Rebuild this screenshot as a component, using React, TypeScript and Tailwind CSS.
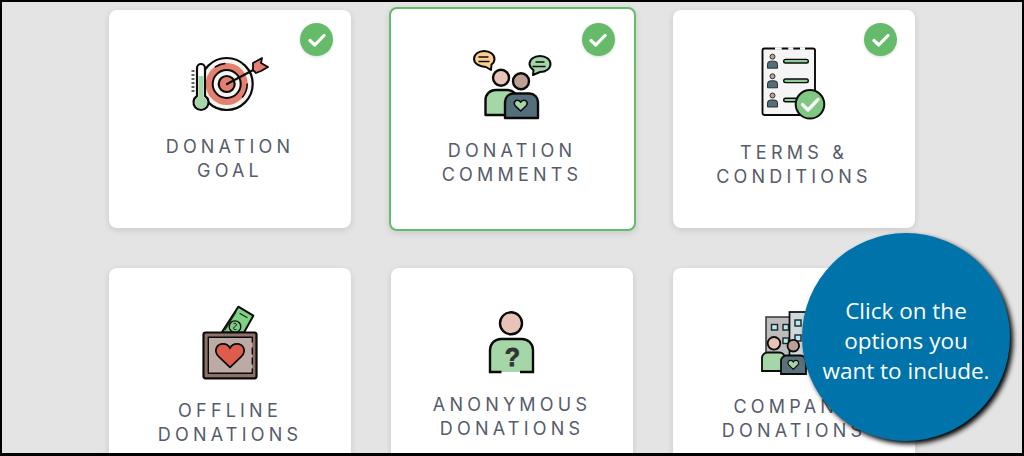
import React from "react";

const K = "#0a0a0a";

function Heart({ x, y, s, fill, w }: { x: number; y: number; s: number; fill: string; w: number }) {
  return (
    <path
      transform={`translate(${x} ${y}) scale(${s})`}
      d="M0 12 L-11.5 1 C-17 -5 -13 -11.5 -7 -11.5 C-3.5 -11.5 -1 -9.5 0 -7 C1 -9.5 3.5 -11.5 7 -11.5 C13 -11.5 17 -5 11.5 1 Z"
      fill={fill}
      stroke={K}
      strokeWidth={w / s}
      strokeLinejoin="round"
    />
  );
}

function GoalIcon() {
  return (
    <svg width="80" height="64" viewBox="190 52 80 64" className="mx-auto block">
      <g stroke={K} strokeLinecap="round" strokeLinejoin="round">
        <circle cx="226.7" cy="84" r="26" fill="#f5f5f0" strokeWidth="2.2" />
        <circle cx="226.7" cy="84" r="21" fill="#e57f70" stroke="none" />
        <circle cx="226.7" cy="84" r="20.5" fill="none" strokeWidth="1.6" strokeDasharray="14 70 10 100" />
        <circle cx="226.7" cy="84" r="14" fill="#f5f5f0" strokeWidth="2" />
        <circle cx="226.7" cy="84" r="8" fill="#e57f70" strokeWidth="2.2" />
        <path d="M227 84 L255 69" fill="none" strokeWidth="2.2" />
        <path d="M253 70 L253 63 L262 58 L261 63 L268 67 L261 71 L256 73 Z" fill="#e57f70" strokeWidth="1.8" />
      </g>
      <path d="M197 92 V68 a4 4 0 0 1 8 0 V96 a7.5 7.5 0 1 1 -8 0 Z" fill="#fff" stroke={K} strokeWidth="2.2" />
      <path d="M198.5 76 h5 V97 a6 6 0 1 1 -5 0 Z" fill="#a5d6a7" />
      <path d="M191.5 71 h3 M191.5 75 h3 M191.5 79 h3 M191.5 83 h3 M191.5 87 h3 M191.5 91 h3" stroke="#333" strokeWidth="1.6" />
    </svg>
  );
}

function CommentsIcon() {
  return (
    <svg width="80" height="72" viewBox="472 48 80 72" className="mx-auto block">
      <g stroke={K} strokeWidth="2" strokeLinejoin="round" strokeLinecap="round">
        <path d="M484 51 c6 0 10.500 3.500 10.500 8 c0 2 -1 4 -3 5.500 L491 70 L486 67 c-6.500 0 -12 -3.500 -12 -8 s4.500 -8 10 -8 Z" fill="#fbcf94" />
        <path d="M479 57 h9 M479 61.500 h10" fill="none" strokeWidth="1.400" />
        <path d="M540 56 c6 0 10.500 3.500 10.500 8 s-4.500 8 -10.500 8 L533 75 L533.500 70 c-2 -1.500 -4 -3.500 -4 -6 c0 -4.500 4.500 -8 10.500 -8 Z" fill="#a5d6a7" />
        <path d="M536 62 h8 M533 66.500 h12" fill="none" strokeWidth="1.400" />
        <path d="M485.500 115 V100 a10 10 0 0 1 10 -10 h12 a10 10 0 0 1 10 10 V115 Z" fill="#a5d6a7" strokeWidth="2.400" />
        <circle cx="501" cy="77.700" r="8" fill="#e8c4b8" strokeWidth="2.400" />
        <circle cx="521" cy="81.300" r="8" fill="#bc9f95" strokeWidth="2.400" />
        <path d="M505 118 V102 a8.500 8.500 0 0 1 8.500 -8.500 h16 a8.500 8.500 0 0 1 8.500 8.500 V118 Z" fill="#546e7a" strokeWidth="2.400" />
      </g>
      <Heart x={520.7} y={105.5} s={0.46} fill="#a5d6a7" w={1.6} />
    </svg>
  );
}

function TinyPerson({ y }: { y: number }) {
  return (
    <g>
      <path d={`M767.500 ${y + 11.500} v-4 a3 3 0 0 1 3 -3 h4 a3 3 0 0 1 3 3 v4 Z`} fill="#546e7a" stroke="#222" strokeWidth="0.9" />
      <circle cx="772.500" cy={y} r="2.500" fill="#bc9f95" stroke="#222" strokeWidth="0.9" />
      <path d={`M785.500 ${y + 4.500} h21`} stroke={K} strokeWidth="5" strokeLinecap="round" />
      <path d={`M785.500 ${y + 4.500} h21`} stroke="#8fce92" strokeWidth="2.200" strokeLinecap="round" />
    </g>
  );
}

function TermsIcon() {
  return (
    <svg width="80" height="76" viewBox="754 46 80 76" className="mx-auto block">
      <rect x="762.500" y="48.500" width="52.500" height="66.500" rx="2" fill="#f5f5f5" stroke={K} strokeWidth="1.900" />
      <path d="M775 48.500 h6.700 M788.300 48.500 h5 M800 48.500 h5" stroke="#fff" strokeWidth="2.400" />
      <TinyPerson y={56.700} />
      <TinyPerson y={76.300} />
      <TinyPerson y={95.500} />
      <circle cx="810" cy="104.300" r="14.300" fill="#81c784" stroke={K} strokeWidth="2" />
      <path d="M802.500 104.500 L808 110 L818 99.500" fill="none" stroke="#f5f5f5" strokeWidth="3.400" strokeLinecap="round" strokeLinejoin="round" />
    </svg>
  );
}

function OfflineIcon() {
  return (
    <svg width="80" height="76" viewBox="190 304 80 76" className="mx-auto block">
      <g stroke={K} strokeLinejoin="round" strokeLinecap="round">
        <path d="M221.700 332.500 L238.300 306.700 L253.300 315.700 L244 332.500 Z" fill="#7fd183" strokeWidth="2" />
        <path d="M240 313.500 L247 317.500 M225 330 L236 312" stroke="#222" strokeWidth="1.200" fill="none" />
        <circle cx="235" cy="326.700" r="5.800" fill="#7ccb84" strokeWidth="1.400" />
        <path d="M234 323.500 c3 -1 3 2 1 3 c-2 1 -2 4 1 3" fill="none" strokeWidth="1" />
        <rect x="203.500" y="332.500" width="53" height="45.800" rx="2" fill="#8d7168" strokeWidth="2.200" />
        <rect x="208.300" y="337.300" width="44" height="36" fill="#bcaaa4" stroke="none" />
        <path d="M252.300 342 V337.300 H208.300 V373.300 H252.300 V369 M252.300 348 V354 M252.300 358 V364" fill="none" strokeWidth="1.400" />
      </g>
      <Heart x={230} y={355.300} s={1} fill="#dd5c4c" w={1.700} />
    </svg>
  );
}

function AnonIcon() {
  return (
    <svg width="80" height="64" viewBox="472 310 80 64" className="mx-auto block">
      <path d="M490 372 V350 a11 11 0 0 1 11 -11 h21 a11 11 0 0 1 11 11 V372 Z" fill="#a5d6a7" />
      <path d="M501.500 372 H490 V350 a11 11 0 0 1 11 -11 h21 a11 11 0 0 1 11 11 V372 H520" fill="none" stroke={K} strokeWidth="2.400" />
      <circle cx="511" cy="323.300" r="11" fill="#e8c4b8" stroke={K} strokeWidth="2.400" />
      <text x="512.500" y="366" textAnchor="middle" fontFamily="'Liberation Sans', sans-serif" fontWeight="700" fontSize="25" fill="#333" stroke="#333" strokeWidth="0.800">?</text>
    </svg>
  );
}

function CompanyIcon() {
  return (
    <svg width="80" height="68" viewBox="754 308 80 68" className="mx-auto block">
      <rect x="766" y="317" width="26" height="40" fill="#bdbdbd" stroke="#333" strokeWidth="1.500" />
      <rect x="789.500" y="312" width="30" height="56" fill="#cfd8dc" stroke={K} strokeWidth="1.700" />
      <g fill="#b2ebf2" stroke="#222" strokeWidth="1.400">
        <rect x="771.500" y="324.500" width="6" height="5.500" />
        <rect x="783" y="324.500" width="5.500" height="5.500" />
        <rect x="795" y="320" width="6" height="6" />
        <rect x="783" y="338" width="5.500" height="5.500" />
        <rect x="795" y="335" width="6" height="6" />
      </g>
      <path d="M762 371 V358 a5.500 5.500 0 0 1 5.500 -5.500 h12 a5.500 5.500 0 0 1 5.500 5.500 V371 Z" fill="#a5d6a7" stroke={K} strokeWidth="1.800" />
      <circle cx="774" cy="343.300" r="6.300" fill="#e8c4b8" stroke={K} strokeWidth="1.800" />
      <path d="M781 374 V361 a5.500 5.500 0 0 1 5.500 -5.500 h14 a5.500 5.500 0 0 1 5.500 5.500 V374 Z" fill="#5a717c" stroke={K} strokeWidth="1.800" />
      <circle cx="793.300" cy="345.700" r="5.800" fill="#bc9f95" stroke={K} strokeWidth="1.800" />
      <Heart x={793.300} y={364.800} s={0.38} fill="#a5d6a7" w={1.200} />
    </svg>
  );
}

function Badge({ pos }: { pos: string }) {
  return (
    <div className={`absolute ${pos} flex h-[33px] w-[33px] items-center justify-center rounded-full bg-[#66bb6a] shadow-[0_1px_3px_rgba(0,0,0,0.15)]`}>
      <svg width="18" height="14" viewBox="0 0 18 14">
        <path d="M2 7.500 L6.800 12 L16 2.500" fill="none" stroke="#fff" strokeWidth="3.200" strokeLinecap="round" strokeLinejoin="round" />
      </svg>
    </div>
  );
}

function Label({ a, b }: { a: string; b: string }) {
  return (
    <div className="mt-[19px] text-center font-['Inter',sans-serif] text-[18px] font-normal leading-[24px] tracking-[4.2px] text-[#565c6b]">
      <div>{a}</div>
      <div>{b}</div>
    </div>
  );
}

export default function App() {
  const card = "relative rounded-lg bg-white shadow-[0_2px_7px_rgba(0,0,0,0.12)]";
  return (
    <div className="relative h-[456px] w-[1024px] overflow-hidden border-x-2 border-t-2 border-b-[3px] border-black bg-[#e4e4e4]">
      <div className="grid grid-cols-[242px_242px_242px] auto-rows-[218px] gap-10 pl-[107px] pt-2">
        <div className={`${card} pt-[42px]`}>
          <GoalIcon />
          <Label a="DONATION" b="GOAL" />
          <Badge pos="right-[18px] top-[13px]" />
        </div>
        <div className={`${card} -mx-[2.5px] -my-[3px] rounded-[10px] border-2 border-[#66bb6a] pt-[39px]`}>
          <CommentsIcon />
          <Label a="DONATION" b="COMMENTS" />
          <Badge pos="right-[19px] top-[14px]" />
        </div>
        <div className={`${card} pt-[36px]`}>
          <TermsIcon />
          <Label a="TERMS &" b="CONDITIONS" />
          <Badge pos="right-[18px] top-[13px]" />
        </div>
        <div className={`${card} pt-[36px]`}>
          <OfflineIcon />
          <Label a="OFFLINE" b="DONATIONS" />
        </div>
        <div className={`${card} pt-[42px]`}>
          <AnonIcon />
          <Label a="ANONYMOUS" b="DONATIONS" />
        </div>
        <div className={`${card} pt-[40px]`}>
          <CompanyIcon />
          <Label a="COMPANY" b="DONATIONS" />
        </div>
      </div>
      <div className="absolute left-[800px] top-[231px] flex h-[208px] w-[208px] flex-col items-center justify-center rounded-full bg-[#0073aa] pt-2 text-center font-['Open_Sans',sans-serif] text-[22.5px] leading-[30px] text-white shadow-[3px_3px_5px_rgba(0,0,0,1)]">
        <div>Click on the</div>
        <div>options you</div>
        <div>want to include.</div>
      </div>
    </div>
  );
}
